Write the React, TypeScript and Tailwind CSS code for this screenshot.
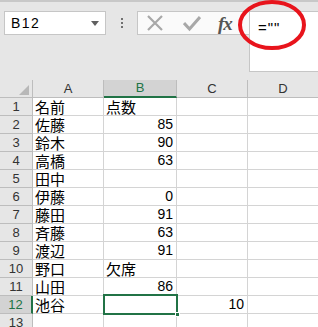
import React from 'react';

type Row = { n: number; a: string; b: string; bLeft?: boolean; c?: string };

const rows: Row[] = [
  { n: 1, a: '名前', b: '点数', bLeft: true },
  { n: 2, a: '佐藤', b: '85' },
  { n: 3, a: '鈴木', b: '90' },
  { n: 4, a: '高橋', b: '63' },
  { n: 5, a: '田中', b: '' },
  { n: 6, a: '伊藤', b: '0' },
  { n: 7, a: '藤田', b: '91' },
  { n: 8, a: '斉藤', b: '63' },
  { n: 9, a: '渡辺', b: '91' },
  { n: 10, a: '野口', b: '欠席', bLeft: true },
  { n: 11, a: '山田', b: '86' },
  { n: 12, a: '池谷', b: '', c: '10' },
  { n: 13, a: '', b: '' },
];

const jp = "font-['Noto_Sans_CJK_JP',sans-serif]";
const num = "font-['Liberation_Sans',Arial,sans-serif]";

export default function App() {
  return (
    <div className="relative w-[318px] h-[327px] overflow-hidden bg-white select-none">
      {/* Toolbar */}
      <div className="h-[80px] bg-[#e6e6e6] border-t-2 border-[#c8c8c8] flex items-start pt-[9px]">
        <div className="ml-[4px] w-[102px] h-[24px] bg-white border border-[#c6c6c6] flex items-center justify-between pl-[6px] pr-[6px]">
          <span className={`${num} text-[14px] leading-none text-black tracking-[1.5px]`}>B12</span>
          <svg width="8" height="5" viewBox="0 0 8 5">
            <path d="M0 0 L8 0 L4 5 Z" fill="#606060" />
          </svg>
        </div>
        <div className="w-[31px] h-[24px] flex flex-col items-center justify-center gap-[2px]">
          <span className="w-[2px] h-[2px] bg-[#707070]" />
          <span className="w-[2px] h-[2px] bg-[#707070]" />
          <span className="w-[2px] h-[2px] bg-[#707070]" />
        </div>
        <div className="w-[112px] h-[24px] bg-[#fafafa] border border-[#c6c6c6] border-r-0 flex items-center pl-[8px]">
          <svg width="18" height="18" viewBox="0 0 18 18">
            <path d="M2 2 L16 16 M16 2 L2 16" stroke="#a8a8a8" strokeWidth="2.2" />
          </svg>
          <svg width="18" height="18" viewBox="0 0 18 18" className="ml-[19px]">
            <path d="M1 9 L6.5 15 L17 3" stroke="#a8a8a8" strokeWidth="3" fill="none" />
          </svg>
          <span className="ml-[17px] font-['Liberation_Serif',serif] italic font-bold text-[19px] leading-none text-[#555] tracking-[-1px]">
            fx
          </span>
        </div>
        <div className="flex-1 h-[61px] bg-white border border-[#c6c6c6] border-r-0 pl-[8px] pt-[3px]">
          <span className={`${num} text-[15px] leading-[18px] text-black tracking-[1px]`}>=""</span>
        </div>
      </div>

      {/* Sheet */}
      <div className="grid grid-cols-[33px_71px_73px_71px_1fr]">
        {/* header row */}
        <div className="h-[18px] bg-[#e6e6e6] border-r border-b border-[#bdbdbd] relative">
          <svg width="10" height="10" viewBox="0 0 10 10" className="absolute right-[3px] bottom-[2px]">
            <path d="M10 0 L10 10 L0 10 Z" fill="#b8b8b8" />
          </svg>
        </div>
        <div className={`h-[18px] bg-[#e6e6e6] border-r border-b border-[#bdbdbd] flex items-center justify-center text-[13px] text-[#333] ${num}`}>A</div>
        <div className={`h-[18px] bg-[#d3d3d3] border-r border-[#bdbdbd] border-b-2 border-b-[#217346] flex items-center justify-center text-[13px] text-[#217346] ${num}`}>B</div>
        <div className={`h-[18px] bg-[#e6e6e6] border-r border-b border-[#bdbdbd] flex items-center justify-center text-[13px] text-[#333] ${num}`}>C</div>
        <div className={`h-[18px] bg-[#e6e6e6] border-b border-[#bdbdbd] flex items-center justify-center text-[13px] text-[#333] ${num}`}>D</div>

        {rows.map((r) => (
          <React.Fragment key={r.n}>
            <div
              className={`h-[18px] border-r border-b border-[#bdbdbd] flex items-center justify-center text-[13px] leading-none ${num} ${
                r.n === 12 ? 'bg-[#d3d3d3] text-[#217346] border-r-2 border-r-[#217346]' : 'bg-[#e6e6e6] text-[#333]'
              }`}
            >
              {r.n}
            </div>
            <div className={`h-[18px] border-r border-b border-[#d4d4d4] pl-[2px] text-[15px] leading-[17px] text-black ${jp}`}>
              {r.a}
            </div>
            <div
              className={`h-[18px] border-r border-b border-[#d4d4d4] leading-[17px] text-black ${
                r.bLeft ? `pl-[2px] text-[15px] ${jp}` : `text-right pr-[3px] ${num} text-[14px]`
              }`}
            >
              {r.b}
            </div>
            <div className={`h-[18px] border-r border-b border-[#d4d4d4] text-right pr-[3px] text-[14px] leading-[17px] text-black ${num}`}>
              {r.c ?? ''}
            </div>
            <div className="h-[18px] border-b border-[#d4d4d4]" />
          </React.Fragment>
        ))}
      </div>

      {/* selection B12 */}
      <div className="absolute left-[103px] top-[294px] w-[75px] h-[21px] border-2 border-[#217346]" />
      <div className="absolute left-[175px] top-[312px] w-[5px] h-[5px] bg-[#217346] border border-white" />

      {/* red ellipse annotation */}
      <svg className="absolute left-0 top-0 pointer-events-none" width="318" height="327">
        <ellipse cx="272" cy="25" rx="32" ry="23" fill="none" stroke="#e8141c" strokeWidth="4" />
      </svg>
    </div>
  );
}
